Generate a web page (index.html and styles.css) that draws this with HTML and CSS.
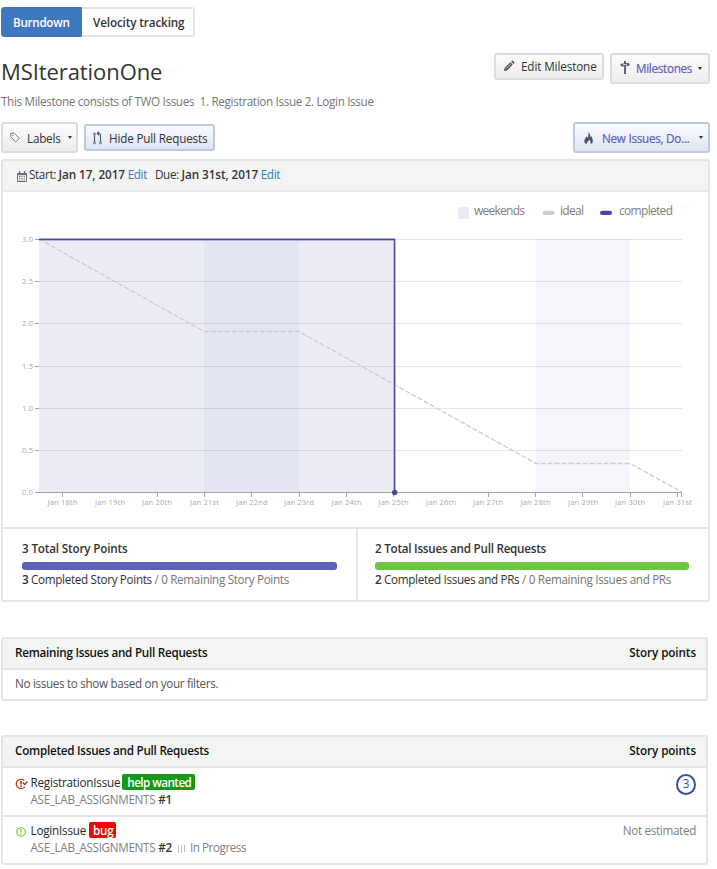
FILE: index.html
```html
<!DOCTYPE html>
<html lang="en">
<head>
<meta charset="utf-8">
<title>MSIterationOne</title>
<link rel="stylesheet" href="styles.css">
</head>
<body>
<nav class="tabs"><a class="tab active"><span class="t-burn">Burndown</span></a><a class="tab"><span class="t-velo">Velocity tracking</span></a></nav>

<header class="heading">
  <h1><span class="t-title">MSIterationOne</span></h1>
  <div class="actions">
    <button class="btn edit"><svg width="12" height="12" viewBox="0 0 12 12"><path fill="#4b545d" d="M1 11l.6-3L7.400 2.200l2.400 2.400L4 10.400zM8.100 1.500l.7-.7q.5-.4 1 0l1.400 1.400q.4.500 0 1l-.7.700z"/><path stroke="#fff" stroke-width=".7" d="M3 8.700l5-5"/></svg><span class="t-edit">Edit Milestone</span></button>
    <button class="btn tall milestones accent"><svg width="10" height="14" viewBox="0 0 10 14"><path fill="#5d6670" d="M4 0h2v2h2.500L10 3.500 8.500 5H6v8H4V5.500H1.500L0 4l1.500-1.500H4z"/><path stroke="#dfe1e3" d="M3 3.700h4"/></svg><span class="t-miles">Milestones</span><i class="caret"></i></button>
  </div>
</header>
<p class="description"><span class="t-desc">This Milestone consists of TWO Issues&nbsp; 1. Registration Issue 2. Login Issue</span></p>

<div class="filters">
  <button class="btn tall labels"><svg width="10" height="11" viewBox="0 0 10 11"><path fill="#fff" stroke="#737a81" d="M.8 1.200h3.500L9.300 6.500 5.700 10 .8 4.700z"/><circle cx="2.800" cy="3.200" r=".8" fill="#737a81"/></svg><span class="t-labels">Labels</span><i class="caret"></i></button>
  <button class="btn blue pulls"><svg width="9" height="14" viewBox="0 0 9 14"><path fill="none" stroke="#4b545d" stroke-width="1.100" d="M1.500 4v7M4.500 2.500h1.800q1.200 0 1.200 1.500v7M6 .7L4.300 2.500 6 4.300"/><g fill="#fff" stroke="#4b545d" stroke-width=".9"><circle cx="1.500" cy="3" r="1"/><circle cx="1.500" cy="11.800" r="1"/><circle cx="7.500" cy="11.800" r="1"/></g></svg><span class="t-hide">Hide Pull Requests</span></button>
  <button class="btn tall blue accent pipelines"><svg width="9" height="12" viewBox="0 0 9 12"><path fill="#4b545d" d="M1 11.500Q-.5 8.500 1.500 6q1-.9.900-2 1 .8.800 2.200Q5.200 3.500 4 .300 7 2 6.300 5.600q.8-.4.900-1.600 2.600 3.500 1 7.500H6.300q.8-2.400-1.200-4Q5 9 3.500 9.700 2.800 10.500 3 11.500z"/></svg><span class="t-new">New Issues, Do...</span><i class="caret"></i></button>
</div>

<section class="panel burndown">
  <div class="dates"><svg width="10" height="11" viewBox="0 0 10 11"><path fill="#fff" stroke="#66707a" d="M.5 2.500h9v8h-9z"/><path stroke="#66707a" stroke-width="1.300" d="M2.500 0v3M7.500 0v3M.5 3.500h9"/><path stroke="#66707a" stroke-dasharray="1.300 1" d="M2 5.500h6.500M2 7.300h6.500M2 9h6.500"/></svg><span class="t-start">Start: <b>Jan 17, 2017</b> <a>Edit</a></span><span class="t-due">Due: <b>Jan 31st, 2017</b> <a>Edit</a></span></div>
  <svg class="chart" viewBox="3 192 705 335" width="705" height="335">
    <g class="legend">
      <rect x="458" y="207" width="11" height="12" rx="1" fill="#e9ebf7"/>
      <text x="474" y="215" textLength="51">weekends</text>
      <rect x="542.500" y="210.800" width="12" height="4.200" rx="2.100" fill="#ccc"/>
      <text x="560" y="215" textLength="24">ideal</text>
      <rect x="600" y="210.800" width="12" height="4.200" rx="2.100" fill="#3e4c9f"/>
      <text x="619" y="215" textLength="54">completed</text>
    </g>
    <rect x="536" y="239" width="94" height="253" fill="#f5f6fc"/>
    <rect x="39" y="239" width="356" height="253" fill="#ececf6"/>
    <rect x="204" y="239" width="95" height="253" fill="#e3e5f3"/>
    <path class="grid" d="M39 239.500H682M39 281.500H682M39 323.500H682M39 366.500H682M39 408.500H682M39 450.500H682"/>
    <path class="ideal" d="M39 239L204 331.500H299L536 463.500H630L682 492"/>
    <path class="axis" d="M35 492.500H682M35 239.500h4M35 281.500h4M35 323.500h4M35 366.500h4M35 408.500h4M35 450.500h4M62.500 492v5M157.500 492v5M204.500 492v5M251.500 492v5M299.500 492v5M346.500 492v5M393.500 492v5M488.500 492v5M535.500 492v5M582.500 492v5M630.500 492v5M677.500 492v5M681.500 492v5"/>
    <path d="M39 239.500H394.500V492" fill="none" stroke="#d1d4ee" stroke-width="3"/>
    <path d="M39 239.500H394.500V492" fill="none" stroke="#3f4a9c" stroke-width="1.300"/>
    <circle cx="394.700" cy="492.500" r="2.700" fill="#3f4a9c"/>
    <g class="ylabels">
      <text x="22" y="242" textLength="11">3.0</text><text x="22" y="284" textLength="11">2.5</text><text x="22" y="326" textLength="11">2.0</text><text x="22" y="369" textLength="11">1.5</text><text x="22" y="411" textLength="11">1.0</text><text x="22" y="453" textLength="11">0.5</text><text x="22" y="495" textLength="11">0.0</text>
    </g>
    <g class="xlabels">
      <text x="47.500" y="505" textLength="30">Jan 18th</text><text x="95" y="505" textLength="30">Jan 19th</text><text x="142" y="505" textLength="30">Jan 20th</text><text x="190" y="505" textLength="29">Jan 21st</text><text x="236" y="505" textLength="31.500">Jan 22nd</text><text x="284" y="505" textLength="30">Jan 23rd</text><text x="331.500" y="505" textLength="30">Jan 24th</text><text x="378.500" y="505" textLength="30">Jan 25th</text><text x="426" y="505" textLength="30">Jan 26th</text><text x="473" y="505" textLength="30">Jan 27th</text><text x="520.500" y="505" textLength="30">Jan 28th</text><text x="568" y="505" textLength="30">Jan 29th</text><text x="615" y="505" textLength="30">Jan 30th</text><text x="663" y="505" textLength="29">Jan 31st</text>
    </g>
  </svg>
  <div class="totals">
    <div class="total"><strong class="t-tsp">3 Total Story Points</strong><div class="bar points"></div><div class="breakdown t-csp"><b>3</b> <em>Completed Story Points</em> / 0 Remaining Story Points</div></div>
    <div class="total"><strong class="t-tip">2 Total Issues and Pull Requests</strong><div class="bar issues"></div><div class="breakdown t-cip"><b>2</b> <em>Completed Issues and PRs</em> / 0 Remaining Issues and PRs</div></div>
  </div>
</section>

<section class="panel list remaining">
  <div class="list-head"><span class="t-rem">Remaining Issues and Pull Requests</span><span class="t-sp">Story points</span></div>
  <p class="empty"><span class="t-no">No issues to show based on your filters.</span></p>
</section>

<section class="panel list completed">
  <div class="list-head"><span class="t-comp">Completed Issues and Pull Requests</span><span class="t-sp">Story points</span></div>
  <div class="issue">
    <svg class="state" width="13" height="12" viewBox="0 0 13 12"><path fill="none" stroke="#bd2c00" stroke-width="1.200" d="M9.200 2.300A4.900 4.500 0 1 0 9.800 8.800M7.800 4.500l2 2L12.600 3.300"/><path stroke="#bd2c00" stroke-width="1.600" d="M6 3v3.600M6 7.500v1.500"/></svg>
    <div class="info"><div class="line"><span class="t-reg">RegistrationIssue</span><span class="tag help"><span class="t-help">help wanted</span></span></div><div class="meta"><span class="t-ase">ASE_LAB_ASSIGNMENTS</span> <b>#1</b></div></div>
    <span class="estimate">3</span>
  </div>
  <div class="issue">
    <svg class="state" width="13" height="12" viewBox="0 0 13 12"><circle cx="6" cy="6" r="4.300" fill="none" stroke="#6cc644" stroke-width="1.100"/><path stroke="#6cc644" stroke-width="1.300" d="M6 3v3.600M6 7.500v1.300"/></svg>
    <div class="info"><div class="line"><span class="t-login">LoginIssue</span><span class="tag bug"><span class="t-bug">bug</span></span></div><div class="meta"><span class="t-ase">ASE_LAB_ASSIGNMENTS</span> <b>#2</b><svg class="pipe" width="8" height="8" viewBox="0 0 8 8"><path stroke="#bbb" d="M1.500 0v8M4.500 0v8M7.500 0v7"/></svg><span class="t-prog">In Progress</span></div></div>
    <span class="none t-not">Not estimated</span>
  </div>
</section>
</body>
</html>
```

FILE: styles.css
```css
* { box-sizing: border-box; }
body { margin: 0; padding: 7px 7px 0 1px; background: #fff; color: #333; font: 11.7px/16px "Open Sans", "Noto Sans", sans-serif; }
h1, p { margin: 0; }
svg { display: block; flex: none; }
b, strong { font-weight: 600; }
span, strong { white-space: nowrap; }

.tabs { display: flex; height: 30px; }
.tab { display: flex; align-items: center; border: 2px solid #e5e5e5; border-left: 0; border-radius: 0 3px 3px 0; padding: 0 0 1px 11px; width: 113px; font-weight: 600; }
.tab.active { width: 81px; border: 1px solid #4078c0; border-radius: 3px 0 0 3px; background: #4078c0; color: #fff; }

.heading { display: flex; justify-content: space-between; height: 47px; margin-top: 16px; }
h1 { font-size: 22px; line-height: 28px; font-weight: 400; padding-top: 4px; color: #333; }
.actions { display: flex; gap: 6px; align-items: flex-start; }
.btn { display: flex; align-items: center; height: 27px; padding: 0 0 1px 8px; border: 2px solid #dcdcdc; border-radius: 3px; background: linear-gradient(#fcfcfc, #ededed); color: #333; font: inherit; }
.btn.tall { height: 31px; }
.btn.blue { border-color: #bdc9df; background: linear-gradient(#f8faff, #dfe6f3); }
.btn.accent { color: #5e60ba; font-weight: 500; -webkit-text-stroke: .2px #5e60ba; }
.caret { margin-left: auto; margin-right: 6px; border: 2px solid transparent; border-top: 3px solid #333; border-bottom: 0; }
.edit { width: 110px; padding-left: 7px; gap: 6px; }
.milestones { width: 100px; gap: 6px; }
.description { height: 16px; margin-top: -7px; color: #767676; }

.filters { display: flex; align-items: center; height: 31px; margin-top: 13px; }
.filters .btn { padding-bottom: 0; }
.labels { width: 77px; padding-left: 7px; gap: 7px; }
.pulls { width: 131px; margin-left: 6px; padding-left: 7px; gap: 7px; }
.pipelines { width: 137px; margin-left: auto; padding-left: 9px; gap: 9px; }

.panel { border: 2px solid #e5e5e5; border-radius: 3px; }
.burndown { height: 443px; margin-top: 6px; }
.dates { display: flex; align-items: center; height: 31px; padding: 0 0 3px 14px; background: #f3f5f5; border-bottom: 2px solid #e8e8e8; }
.dates svg { margin: 4px 2px 0 0; }
.dates a { color: #4078c0; }
.dates b { letter-spacing: -.06px; }
.t-due { margin-left: 8px; }
.legend text { font-size: 12px; fill: #808080; }
.grid { stroke: #000; stroke-opacity: .1; fill: none; }
.ideal { stroke: #ccc; stroke-width: 1.3; stroke-dasharray: 5 2; fill: none; }
.axis { stroke: #a5a5a5; fill: none; }
.ylabels, .xlabels { font-size: 7.5px; fill: #aaa; }
.totals { display: grid; grid-template-columns: 355px minmax(0, 1fr); height: 73px; border-top: 2px solid #e5e5e5; }
.total { padding: 11px 19px 0; }
.total:first-child { border-right: 2px solid #e5e5e5; }
.total + .total { padding-left: 17px; }
.total strong { display: block; }
.bar { height: 8px; margin: 6px 0 1px; border-radius: 3px; }
.points { background: #5e60ba; }
.issues { background: #6cc644; }
.breakdown { color: #767676; white-space: nowrap; }
.breakdown b, .breakdown em { color: #333; font-style: normal; }

.list { width: 707px; }
.remaining { height: 64px; margin-top: 35px; }
.completed { height: 130px; margin-top: 34px; }
.list-head { display: flex; justify-content: space-between; height: 31px; padding: 5px 10px 0 12px; background: #f3f5f5; border-bottom: 2px solid #e5e5e5; color: #111; font-weight: 600; }
.empty { padding: 5px 12px; color: #555; }
.issue { display: flex; height: 47px; padding: 6px 10px 0 12px; }
.issue + .issue { height: 49px; padding-top: 5px; border-top: 2px solid #e5e5e5; }
.state { margin: 4px 2.5px 0 0; }
.info { flex: 1; }
.line { display: flex; height: 17px; color: #24292e; }
.tag { height: 16px; margin-left: 2px; padding: 0 4px 0 5px; border-radius: 2px; color: #fff; font-weight: 600; }
.help { background: #159818; }
.bug { margin-left: 3px; padding: 0 3px 0 4px; background: #ee0701; }
.meta { display: flex; align-items: center; color: #808080; }
.meta b { margin-left: 3px; letter-spacing: -.3px; color: #333; }
.pipe { margin: 4px 5px 0 5px; }
.estimate { width: 20px; height: 21px; border: 2px solid #3e4c9f; border-radius: 50%; color: #3e4c9f; text-align: center; line-height: 15px; }
.none { color: #808080; }

/* Tracking per label */
.t-burn, .t-miles, .t-start, .t-due { letter-spacing: -.3px; }
.t-velo, .t-edit { letter-spacing: -.12px; }
.t-title { letter-spacing: -.08px; }
.t-labels, .t-reg, .t-login { letter-spacing: -.22px; }
.t-hide, .t-tsp { letter-spacing: -.17px; }
.t-sp { letter-spacing: -.09px; }
.t-new, .t-tip, .t-rem, .t-comp, .t-bug { letter-spacing: -.26px; }
.t-start, .t-due { letter-spacing: -.36px; }
.t-desc, .t-csp, .t-cip, .t-no, .t-ase, .t-not { letter-spacing: -.33px; }
.t-help { letter-spacing: -.55px; }
.t-prog { letter-spacing: -.45px; }
```
